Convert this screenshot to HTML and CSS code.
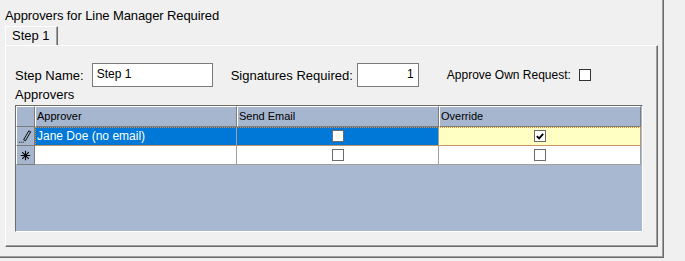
FILE: index.html
```html
<!DOCTYPE html>
<html lang="en">
<head>
  <meta charset="UTF-8">
  <title>Approvers for Line Manager Required</title>
  <link rel="stylesheet" href="styles.css">
</head>
<body>
  <!-- Group box -->
  <div class="frame">
    <div class="group-title">Approvers for Line Manager Required</div>

    <div class="tabs">
      <div class="tab">Step 1</div>
    </div>

    <div class="tab-panel">
      <!-- Step settings -->
      <div class="step-row">
        <span class="field-label">Step Name:</span>
        <div class="text-box step-name">Step 1</div>
        <span class="field-label sig-label">Signatures Required:</span>
        <div class="text-box sig-count">1</div>
        <span class="field-label own-label">Approve Own Request:</span>
        <span class="check own-check"></span>
      </div>

      <div class="section-label">Approvers</div>

      <!-- Approvers grid -->
      <div class="grid">
        <div class="grid-row head-row">
          <div class="row-head"></div>
          <div class="head-cell">Approver</div>
          <div class="head-cell">Send Email</div>
          <div class="head-cell">Override</div>
        </div>

        <div class="grid-row data-row">
          <div class="row-head">
            <svg width="18" height="19" viewBox="0 0 18 19">
              <path d="M12.5 3.5 L14.5 4.5 L9 14 L7 13 Z" fill="none" stroke="#000" stroke-width="1"/>
              <rect x="2" y="15" width="1" height="1" fill="#000"/>
              <rect x="4" y="15" width="1" height="1" fill="#000"/>
              <rect x="6" y="15" width="1" height="1" fill="#000"/>
            </svg>
          </div>
          <div class="data-cells selected">
            <div class="cell">Jane Doe (no email)</div>
            <div class="cell center"><span class="check"></span></div>
            <div class="cell center current">
              <span class="check">
                <svg width="11" height="11" viewBox="0 0 11 11">
                  <path d="M2 5 L4.5 7.5 L9 2.5" fill="none" stroke="#000" stroke-width="2"/>
                </svg>
              </span>
            </div>
          </div>
        </div>

        <div class="grid-row data-row">
          <div class="row-head">
            <svg width="18" height="19" viewBox="0 0 18 19">
              <path d="M9 4.5 V14.5 M4 9.5 H14 M5.5 6 L12.5 13 M12.5 6 L5.5 13" stroke="#000" stroke-width="1.2" fill="none"/>
            </svg>
          </div>
          <div class="data-cells">
            <div class="cell"></div>
            <div class="cell center"><span class="check"></span></div>
            <div class="cell center"><span class="check"></span></div>
          </div>
        </div>
      </div>
    </div>
  </div>
</body>
</html>
```

FILE: styles.css
```css
/* General */
body {
  margin: 0;
  background-color: #f0f0f0;
  font-family: 'Liberation Sans', Arial, sans-serif;
  font-size: 13px;
  color: #000;
}

.frame {
  box-sizing: border-box;
  width: 664px;
  height: 258px;
  padding: 8px 0 0 5px;
  border-right: 1px solid #6a6a6a;
  border-bottom: 1px solid #6a6a6a;
  box-shadow: inset -1px -1px 0 #a0a0a0;
}

.group-title {
  line-height: 15px;
  height: 15px;
  letter-spacing: -0.1px;
}

/* Tabs */
.tabs {
  display: flex;
  margin-top: 3px;
}

.tab {
  box-sizing: border-box;
  width: 53px;
  height: 19px;
  padding-left: 6px;
  line-height: 18px;
  border-top: 1px solid #fff;
  border-left: 1px solid #fff;
  border-right: 1px solid #696969;
  box-shadow: inset -1px 0 0 #a0a0a0;
}

.tab-panel {
  box-sizing: border-box;
  width: 653px;
  height: 202px;
  padding-left: 9px;
  border-top: 1px solid #fff;
  border-left: 1px solid #fff;
  border-right: 1px solid #696969;
  border-bottom: 1px solid #696969;
  box-shadow: inset -1px -1px 0 #a0a0a0;
}

/* Step settings row */
.step-row {
  display: flex;
  align-items: center;
  height: 24px;
  margin-top: 17px;
}

.text-box {
  box-sizing: border-box;
  height: 24px;
  padding: 0 4px;
  line-height: 20px;
  background-color: #fff;
  border: 1px solid #7a7a7a;
  font-size: 12px;
}

.step-name {
  width: 121px;
  margin-left: 8px;
}

.sig-label {
  margin-left: 18px;
}

.sig-count {
  width: 62px;
  margin-left: 4px;
  text-align: right;
}

.own-label {
  margin-left: 28px;
  font-size: 12px;
}

.own-check {
  margin-left: 8px;
  width: 13px;
  height: 13px;
}

.section-label {
  height: 15px;
  line-height: 15px;
}

/* Grid */
.grid {
  box-sizing: border-box;
  width: 628px;
  height: 127px;
  margin-top: 3px;
  background-color: #a8b8d0;
  border: 1px solid;
  border-color: #6d6d6d #fff #fff #6d6d6d;
}

.grid-row {
  display: flex;
}

.row-head,
.head-cell {
  box-sizing: border-box;
  background-color: #a6b6cf;
  border-top: 1px solid #fff;
  border-left: 1px solid #fff;
  border-right: 1px solid #7c7c7c;
  border-bottom: 1px solid #7c7c7c;
}

.row-head {
  width: 19px;
  display: flex;
  align-items: center;
  justify-content: center;
}

.head-row {
  height: 21px;
}

.head-cell {
  width: 202px;
  padding-left: 1px;
  font-size: 11px;
  line-height: 19px;
}

.data-row {
  height: 19px;
}

.data-row .row-head {
  border-top: none;
}

.data-cells {
  display: flex;
}

.data-cells.selected {
  outline: 1px dotted #e58a2e;
  outline-offset: -1px;
}

.cell {
  box-sizing: border-box;
  width: 202px;
  height: 19px;
  padding-left: 2px;
  line-height: 18px;
  font-size: 12px;
  background-color: #fff;
  border-right: 1px solid #a0a0a0;
  border-bottom: 1px solid #a0a0a0;
}

.selected .cell {
  background-color: #0078d7;
  color: #fff;
}

.selected .cell.current {
  background-color: #ffffc4;
  color: #000;
}

.cell.center {
  display: flex;
  align-items: center;
  justify-content: center;
  padding-left: 0;
}

/* Checkboxes */
.check {
  box-sizing: border-box;
  display: inline-flex;
  align-items: center;
  justify-content: center;
  width: 12px;
  height: 12px;
  background-color: #fff;
  border: 1px solid #333;
}

.cell .check {
  border-color: #6b6b6b;
}
```
